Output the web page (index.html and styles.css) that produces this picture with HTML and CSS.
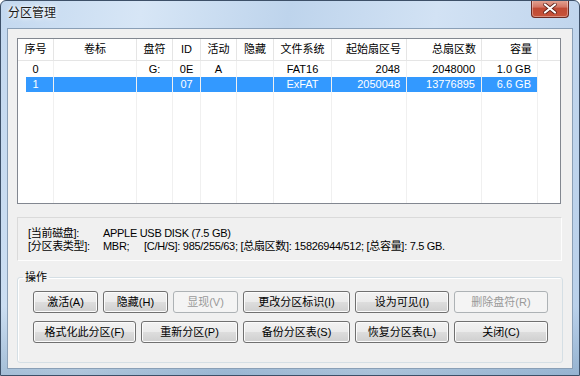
FILE: index.html
```html
<!DOCTYPE html>
<html lang="zh-cn">

<head>
  <meta charset="utf-8" />
  <title>分区管理</title>
  <link rel="stylesheet" href="styles.css">
</head>

<body>
  <div class="window">
    <div class="titlebar">
      <span class="title">分区管理</span>
      <span class="close">
        <svg width="14" height="11" viewBox="0 0 14 11">
          <path d="M2 1.5 L12 9.5 M12 1.5 L2 9.5" stroke="#5a2018" stroke-width="3.6" stroke-linecap="round" />
          <path d="M2 1.5 L12 9.5 M12 1.5 L2 9.5" stroke="#fff" stroke-width="2.2" stroke-linecap="round" />
        </svg>
      </span>
    </div>
    <div class="frame">
      <div class="client">
        <div class="listview">
          <table class="parts">
            <colgroup>
              <col class="c-no"><col class="c-label"><col class="c-drive"><col class="c-id"><col class="c-act">
              <col class="c-hide"><col class="c-fs"><col class="c-start"><col class="c-total"><col class="c-size"><col>
            </colgroup>
            <thead>
              <tr>
                <th>序号</th><th>卷标</th><th>盘符</th><th>ID</th><th>活动</th><th>隐藏</th><th>文件系统</th>
                <th class="num">起始扇区号</th><th class="num">总扇区数</th><th class="num">容量</th><th class="fill"></th>
              </tr>
            </thead>
            <tbody>
              <tr>
                <td>0</td><td></td><td>G:</td><td>0E</td><td>A</td><td></td><td>FAT16</td>
                <td class="num">2048</td><td class="num">2048000</td><td class="num">1.0 GB</td><td class="fill"></td>
              </tr>
              <tr class="sel">
                <td>1</td><td></td><td></td><td>07</td><td></td><td></td><td>ExFAT</td>
                <td class="num">2050048</td><td class="num">13776895</td><td class="num">6.6 GB</td><td class="fill"></td>
              </tr>
              <tr class="empty">
                <td></td><td></td><td></td><td></td><td></td><td></td><td></td><td></td><td></td><td></td><td class="fill"></td>
              </tr>
            </tbody>
          </table>
        </div>

        <div class="diskinfo">
          <p><span class="key">[当前磁盘]:</span>APPLE USB DISK (7.5 GB)</p>
          <p><span class="key">[分区表类型]:</span><span class="mbr">MBR;</span>[C/H/S]: 985/255/63; [总扇区数]: 15826944/512; [总容量]: 7.5 GB.</p>
        </div>

        <fieldset class="ops">
          <legend>操作</legend>
          <div class="btnrow">
            <button class="btn w65">激活(A)</button>
            <button class="btn w65">隐藏(H)</button>
            <button class="btn w65" disabled>显现(V)</button>
            <button class="btn w107">更改分区标识(I)</button>
            <button class="btn w94">设为可见(I)</button>
            <button class="btn w94" disabled>删除盘符(R)</button>
          </div>
          <div class="btnrow">
            <button class="btn w103">格式化此分区(F)</button>
            <button class="btn w97">重新分区(P)</button>
            <button class="btn w107">备份分区表(S)</button>
            <button class="btn w94">恢复分区表(L)</button>
            <button class="btn w94">关闭(C)</button>
          </div>
        </fieldset>
      </div>
    </div>
  </div>
</body>

</html>
```

FILE: styles.css
```css
*{margin:0;padding:0;box-sizing:border-box;}
body{background:#fff;font:11px/13px "Liberation Sans","Noto Sans CJK SC",sans-serif;color:#000;}

/* window frame */
.window{width:580px;height:376px;border:1px solid #3d5068;border-radius:6px 6px 0 0;display:flex;flex-direction:column;overflow:hidden;
  background:linear-gradient(100deg,#c3d8ef 0%,#d7e6f6 22%,#bed4ec 45%,#d2e2f4 68%,#b9d0ea 100%);}
.titlebar{height:27px;flex:none;display:flex;justify-content:space-between;align-items:flex-start;padding-left:7px;}
.title{font-size:12px;line-height:24px;color:#1a1a1a;text-shadow:0 0 6px #fff,0 0 3px #fff;}
.close{width:38px;height:18px;margin-right:10px;margin-top:-1px;display:flex;align-items:center;justify-content:center;
  border:1px solid #6b2a22;border-top:none;border-radius:0 0 4px 4px;
  background:linear-gradient(#e5a796 0%,#d47766 40%,#c04a34 50%,#c7533a 100%);box-shadow:inset 0 0 0 1px rgba(255,255,255,.35);}
.frame{flex:1;padding:0 6px 7px;background:linear-gradient(to bottom,transparent 80%,rgba(40,90,130,.25));}
.client{height:341px;border:1px solid #8a9fb6;background:#f0f0f0;padding:9px 0 0 9px;}

/* partition list */
.listview{width:544px;height:166px;border:1px solid #828790;background:#fff;overflow:hidden;}
.parts{width:100%;height:100%;border-collapse:separate;border-spacing:0;table-layout:fixed;}
.c-no{width:36px;} .c-label{width:83px;} .c-drive{width:36px;} .c-id{width:28px;} .c-act{width:36px;}
.c-hide{width:37px;} .c-fs{width:58px;} .c-start{width:75px;} .c-total{width:75px;} .c-size{width:56px;}
.parts th{height:22px;font-weight:normal;text-align:center;padding:0 5px;border-right:1px solid #e5e5e5;border-bottom:1px solid #e5e5e5;white-space:nowrap;overflow:hidden;}
.parts td{height:15px;text-align:center;padding:0 6px;border-right:1px solid #f0f0f0;white-space:nowrap;overflow:hidden;background-clip:padding-box;}
.parts tbody tr:first-child td{height:16px;padding-top:1px;}
.parts .num{text-align:right;}
.parts .fill{border-right:none;}
.parts .empty td{height:auto;}
.parts .sel td{background:#3399ff;color:#fff;}
.parts .sel td:first-child{background:linear-gradient(to right,#fff 8px,#3399ff 8px);}
.parts .sel td.fill{background:#fff;}

/* disk info */
.diskinfo{width:545px;height:44px;margin-top:13px;padding:9px 0 0 10px;letter-spacing:-0.3px;border:1px solid;border-color:#dadada #fdfdfd #fdfdfd #dadada;}
.diskinfo p{white-space:nowrap;}
.key{display:inline-block;width:75px;}
.mbr{display:inline-block;width:41px;}

/* operations */
.ops{width:546px;height:92px;margin-top:10px;border:1px solid #d5dfe5;border-radius:3px;padding:7px 0 0 0;box-shadow:inset 1px 1px 0 #fff;}
.ops legend{margin-left:5px;padding:0 2px;}
.btnrow{display:flex;gap:5px;margin-left:15px;}
.btnrow + .btnrow{margin-top:8px;}
.btn{height:22px;font:inherit;color:#000;border:1px solid #707070;border-radius:3px;
  background:linear-gradient(#f2f2f2 0%,#ebebeb 48%,#dddddd 52%,#cfcfcf 100%);box-shadow:inset 0 0 0 1px #fbfbfb;}
.btn:disabled{color:#999;border-color:#adb2b5;background:#f4f4f4;box-shadow:none;}
.w65{width:65px;} .w94{width:94px;} .w97{width:97px;} .w103{width:103px;} .w107{width:107px;}
```
